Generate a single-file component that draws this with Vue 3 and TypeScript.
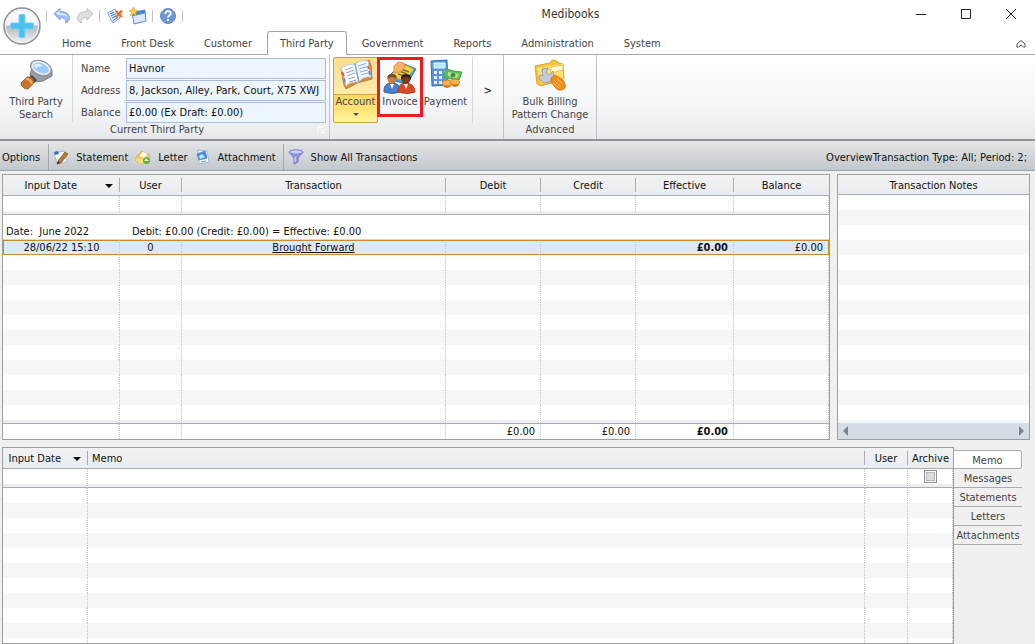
<script setup lang="ts">
import { ref } from 'vue'

interface Item { label: string; icon?: string }

const tabs: string[] = ['Home', 'Front Desk', 'Customer', 'Third Party', 'Government', 'Reports', 'Administration', 'System']
const activeTab = ref('Third Party')
const fields = [
  { id: 'name', label: 'Name', value: 'Havnor' },
  { id: 'address', label: 'Address', value: '8, Jackson, Alley, Park, Court, X75 XWJ' },
  { id: 'balance', label: 'Balance', value: '£0.00 (Ex Draft: £0.00)' },
]
const actions: Item[] = [
  { label: 'Statement', icon: 'statement' },
  { label: 'Letter', icon: 'letter' },
  { label: 'Attachment', icon: 'attachment' },
]
const columns: string[] = ['Input Date', 'User', 'Transaction', 'Debit', 'Credit', 'Effective', 'Balance']
const sideTabs: string[] = ['Memo', 'Messages', 'Statements', 'Letters', 'Attachments']
const activeSide = ref('Memo')
const archived = ref(false)
</script>

<template>
  <div class="window">
    <header class="top">
      <button class="orb" aria-label="Application menu">
        <svg viewBox="0 0 40 40" width="40" height="40">
          <defs>
            <linearGradient id="orbTop" x1="0" y1="0" x2="0" y2="1">
              <stop offset="0" stop-color="#ffffff" /><stop offset="0.48" stop-color="#f1f2f3" />
              <stop offset="0.5" stop-color="#b4b8bc" /><stop offset="1" stop-color="#f6f7f8" />
            </linearGradient>
          </defs>
          <circle cx="20" cy="20" r="18" fill="url(#orbTop)" stroke="#8c9196" stroke-width="1.5" />
          <circle cx="20" cy="20" r="16.4" fill="none" stroke="#eceeef" stroke-width="1.2" />
          <path d="M17 9q3-1.500 6 0v8h8q1.500 3 0 6h-8v8q-3 1.500-6 0v-8H9q-1.500-3 0-6h8z" fill="#4cc0ee" stroke="#79d0f2" />
        </svg>
      </button>
      <div class="top-main">
        <div class="titlebar">
          <div class="quick">
            <i class="bar"></i>
            <button aria-label="Undo"><svg viewBox="0 0 18 18" width="18" height="18"><path d="M1 6.500l6-5v3c6 0 9.500 2.500 9.500 6.500 0 2-1 4-4 5 1.500-3-1-5.500-5.500-5.500v2.500z" fill="#9fc0f2" stroke="#7b9fe0" /><path d="M3 6.500l3.500-3v2.500c4 0 7 1 8.500 4-2-1.500-5-2-9-2z" fill="#dcebff" /></svg></button>
            <button aria-label="Redo"><svg viewBox="0 0 18 18" width="18" height="18"><path d="M17 6.500l-6-5v3c-6 0-9.500 2.500-9.500 6.500 0 2 1 4 4 5-1.500-3 1-5.500 5.500-5.500v2.500z" fill="#dedfe1" stroke="#bfc2c5" /></svg></button>
            <i class="bar"></i>
            <button aria-label="Edit form"><svg viewBox="0 0 18 18" width="18" height="18"><path d="M1.500 6L9 2l5 9-7 5z" fill="#e8f1ff" stroke="#7f9fe0" /><path d="M4 7l4-2M5 9l5-2.500M6 11l5-2.500M7 13.500l5-3" stroke="#5b86dc" stroke-width="1.300" /><path d="M10 4l6 6M16 3.500l-6 6.500" stroke="#e87325" stroke-width="2.400" /></svg></button>
            <button aria-label="New window"><svg viewBox="0 0 18 18" width="18" height="18"><path d="M3 6l13-2 1 10-12 3z" fill="#dce9ff" stroke="#5c86dc" /><path d="M3 5l13-2.500.3 4L4 9z" fill="#4c83df" /><path d="M4.500 0l1.300 3 3.200.5-2.400 2 .8 3-2.900-1.600L1.700 8.500l.8-3L0 3.500 3.200 3z" fill="#ffd347" stroke="#e5a020" stroke-width=".7" /></svg></button>
            <i class="bar"></i>
            <button aria-label="Help"><svg viewBox="0 0 18 18" width="18" height="18"><circle cx="9" cy="9" r="7.500" fill="#6f97d6" stroke="#5f85c8" /><path d="M6.300 7c0-4 5.800-3.500 5.500-.5-.2 1.800-2.800 1.900-2.800 4M9 12v2" fill="none" stroke="#fff" stroke-width="1.900" /></svg></button>
            <i class="bar"></i>
          </div>
          <h1>Medibooks</h1>
          <div class="controls">
            <button aria-label="Minimize"><svg viewBox="0 0 12 12" width="12" height="12"><path d="M1 6.500h10" /></svg></button>
            <button aria-label="Maximize"><svg viewBox="0 0 12 12" width="12" height="12"><path d="M1.500 1.500h9v9h-9z" /></svg></button>
            <button aria-label="Close"><svg viewBox="0 0 12 12" width="12" height="12"><path d="M1 1l10 10M11 1L1 11" /></svg></button>
          </div>
        </div>
        <nav class="tabs">
          <button v-for="t in tabs" :key="t" :class="{ active: t === activeTab }" @click="activeTab = t">{{ t }}</button>
          <button class="collapse" aria-label="Collapse ribbon"><svg viewBox="0 0 10 10" width="10" height="10"><path d="M1 5l4-3.500L9 5v3H7.500L5 6 2.500 8H1z" fill="none" stroke="#50555a" /></svg></button>
        </nav>
      </div>
    </header>

    <section class="ribbon">
      <div class="group party">
        <button class="big search">
          <svg viewBox="0 0 34 34" width="34" height="34">
            <path d="M13 8l-2 8 5 7 8-1 9-5v-6z" fill="#9a9ea2" stroke="#7c8084" />
            <path d="M13 16l5 5-4 4-6-5z" fill="#4b4b4b" />
            <path d="M8 18q6-1 7 6l-6 6q-6 0-7-6z" fill="#c97428" stroke="#a9642a" />
            <path d="M7 20q5 0 6 5" stroke="#efad65" stroke-width="2" fill="none" />
            <ellipse cx="22" cy="9" rx="11" ry="7" transform="rotate(22 22 9)" fill="#c3c6ca" stroke="#8b9096" />
            <ellipse cx="22" cy="9" rx="9" ry="5.500" transform="rotate(22 22 9)" fill="#9fc9f8" stroke="#eef3f8" stroke-width="1.300" />
            <path d="M15 6q5-3 9 1-6 0-7 3z" fill="#dff0ff" />
          </svg>
          <span>Third Party<br>Search</span>
        </button>
        <div class="form">
          <div v-for="f in fields" :key="f.id" class="field">
            <label :for="f.id">{{ f.label }}</label>
            <input :id="f.id" type="text" :value="f.value">
          </div>
        </div>
        <div class="caption">Current Third Party</div>
        <svg class="launcher" viewBox="0 0 8 8" width="8" height="8"><path d="M1 7V1h5M7 3v4H3M3 3l3 3" fill="none" stroke="#fff" /></svg>
      </div>

      <div class="group ops">
        <button class="big account">
          <svg viewBox="0 0 34 34" width="34" height="34">
            <path d="M2 11l16-6 12-3 2 5 1 14-15 4-11 6-2-4z" fill="#d98a3c" stroke="#c87a35" />
            <path d="M2 10q8-5 14-4l4 18q-8-1-13 4z" fill="#fff" stroke="#b9c9dd" />
            <path d="M16 6q6-5 13-3l3 16q-8-1-12 5z" fill="#f1f7ff" stroke="#b9c9dd" />
            <path d="M16 6l4 18" stroke="#8aa6c9" stroke-width="1.500" />
            <path d="M6 12l8-3M7 15l8-3M8 18l8-3M9 21l7-2M10 24l7-2M19 8l8-2.500M20 11l8-2.500M21 14l8-2M22 17l7-2" stroke="#8aa6c9" />
            <path d="M3 14l2 4M29 8l1 3" stroke="#df594b" stroke-width="2" /><path d="M5 20l1 4M30 13l1 4" stroke="#5d8ee0" stroke-width="2" />
          </svg>
          <span>Account</span><b class="drop"></b>
        </button>
        <button class="big invoice">
          <svg viewBox="0 0 34 34" width="34" height="34">
            <path d="M7 15L19 3l14 6-9 15-12-3z" fill="#35a3dc" stroke="#2378b5" />
            <path d="M9 14L20 4l11 5-9 12-10-3z" fill="#f4d14c" stroke="#c79a22" />
            <path d="M18 9l8 3M16 11l8 3M15 14l7 2" stroke="#80702a" stroke-width="1.400" />
            <path d="M11 6l4-4 6 1 1 4-5 5-6 1z" fill="#f7b268" stroke="#e49a48" />
            <path d="M1 32q-1-9 8-9t8 9q-8 3-16 0z" fill="#4a80cc" stroke="#3768af" />
            <path d="M15 32q0-9 8-9t9 9q-8 3-17 0z" fill="#d94d26" stroke="#b33b1b" />
            <circle cx="9" cy="19" r="4.500" fill="#cf7c3c" /><path d="M4.500 19q-1-5 4.500-5t4.500 5q-2-2-4.500-2t-4.500 2z" fill="#7b4a28" />
            <circle cx="23" cy="19" r="4.500" fill="#7c3b1e" /><path d="M18 20q-1-6 5-6t5 6q-2-3-5-3t-5 3z" fill="#33201a" />
            <path d="M7 24l2 5 2-5M21 24l2 5 2-5" fill="#fff" />
          </svg>
          <span>Invoice</span>
        </button>
        <button class="big payment">
          <svg viewBox="0 0 34 34" width="34" height="34">
            <path d="M2 3l16-1 1 25-16 1z" fill="#5b95dd" stroke="#2f6fc0" />
            <path d="M5 5h11v5H5z" fill="#b9e9f6" stroke="#e6faff" />
            <g fill="#e9f3ff"><path d="M5 13h3v3H5zM10 13h3v3h-3zM15 13h2v3h-2zM5 18h3v3H5zM10 18h3v3h-3zM5 23h3v3H5zM10 23h3v3h-3z" /></g>
            <path d="M15 15l3-4 6 2 9 1-3 8-8-1-6-1z" fill="#5fbf55" stroke="#4ba348" /><path d="M19 14l11 2-2 4-9-2z" fill="#b0e49e" /><ellipse cx="24" cy="17" rx="2.500" ry="2" fill="#398d3b" />
            <path d="M14 25v3q4 4 8 0v-3zM22 23v4q4 4 8 0v-4z" fill="#d8731c" /><ellipse cx="18" cy="25" rx="4.500" ry="2.800" fill="#f9b44b" stroke="#dd8427" /><ellipse cx="26" cy="24" rx="4.500" ry="2.800" fill="#f9b44b" stroke="#dd8427" />
          </svg>
          <span>Payment</span>
        </button>
        <button class="more">&gt;</button>
      </div>

      <div class="group advanced">
        <button class="big">
          <svg viewBox="0 0 34 34" width="34" height="34">
            <path d="M2 7l15-3 2-3 5 1 1 2 5 1 1 14-9 4-14 4-4-2z" fill="#f4c63e" stroke="#dda32e" />
            <path d="M4 9l26-4v14L8 24z" fill="#ffe273" /><path d="M18 8l12-2v5l-12 3z" fill="#fff7cd" stroke="#e9c35a" />
            <path d="M9 10l6-1-2 5 4 2 3-4 1 6-4 5-6 1-5-4 1-4 3 1z" fill="#c3ccd8" stroke="#94a0b2" />
            <path d="M18 19l4-3 8 5q4 6 1 9-6 3-9-2l-4-5z" fill="#f28c16" stroke="#dc7d1c" /><path d="M21 21l7 7M20 24l6 5M24 19l6 7" stroke="#ffc456" />
          </svg>
          <span>Bulk Billing<br>Pattern Change</span>
        </button>
        <div class="caption">Advanced</div>
      </div>
    </section>

    <div class="toolbar">
      <button class="options">Options</button>
      <i></i>
      <button v-for="a in actions" :key="a.label">
        <svg viewBox="0 0 16 16" width="16" height="16">
          <g v-if="a.icon === 'statement'"><path d="M1 4l10-2 3 11-10 2z" fill="#fff" stroke="#a9b8d0" /><path d="M1 3l4-1 1 3-4 1z" fill="#3c6cc0" /><path d="M5 12l7-9 3 2-7 9-4 1z" fill="#b67b32" stroke="#7b5430" stroke-width=".7" /><path d="M4 15l1-3 2 2z" fill="#333" /></g>
          <g v-else-if="a.icon === 'letter'"><path d="M1 8l6-6 7 4v5l-7 4-6-3z" fill="#f5cf54" stroke="#d9a93e" /><path d="M4 7l4-5 5 3-3 5z" fill="#fffbe6" stroke="#d9c78c" /><path d="M1 9l6 2 7-4v5l-7 3-6-3z" fill="#f6df76" /><circle cx="11.500" cy="11.500" r="3.500" fill="#62ad43" /><path d="M9 12l2-3 3 3z" fill="#d8f5b3" /></g>
          <g v-else><path d="M3 1l9 1 2 11-10 2z" fill="#f7fbff" stroke="#a6bbd8" /><path d="M2 5l8-3 2 7-8 2z" fill="#438cdc" stroke="#5a8fd2" /><path d="M4 7l3-2 3 3-5 2z" fill="#c7e7ff" /><path d="M6 13l5-1" stroke="#8392ab" /></g>
        </svg>
        <span>{{ a.label }}</span>
      </button>
      <i></i>
      <button class="filter-button">
        <svg viewBox="0 0 16 16" width="16" height="16"><path d="M1 3l5 6v6l4-2V9l5-6z" fill="#9297df" stroke="#7578c6" /><ellipse cx="8" cy="3" rx="7" ry="2.200" fill="#c9cefa" stroke="#7b7fcc" /><path d="M7 8v5" stroke="#c9cefa" stroke-width="1.500" /></svg>
        <span>Show All Transactions</span>
      </button>
      <span class="overview">OverviewTransaction Type: All; Period: 2;</span>
    </div>

    <main class="content">
      <div class="upper">
        <div class="panel">
          <table class="grid">
            <colgroup><col class="c-date"><col class="c-user"><col><col class="c-money"><col class="c-money"><col class="c-effective"><col class="c-balance"></colgroup>
            <thead>
              <tr><th v-for="(c, i) in columns" :key="c"><span>{{ c }}<b v-if="i === 0" class="sort"></b></span></th></tr>
              <tr class="filter"><td v-for="c in columns" :key="c"></td></tr>
            </thead>
            <tbody>
              <tr class="month"><td>Date:&nbsp; June 2022</td><td class="summary" colspan="6">Debit: £0.00 (Credit: £0.00) = Effective: £0.00</td></tr>
            </tbody>
            <tbody>
              <tr class="selected"><td>28/06/22 15:10</td><td>0</td><td><a href="#">Brought Forward</a></td><td></td><td></td><td class="num strong">£0.00</td><td class="num">£0.00</td></tr>
              <tr v-for="r in 11" :key="r" :class="{ stripe: r % 2 === 0, end: r === 11 }"><td v-for="c in columns" :key="c"></td></tr>
            </tbody>
            <tfoot>
              <tr><td></td><td></td><td></td><td class="num">£0.00</td><td class="num">£0.00</td><td class="num strong">£0.00</td><td></td></tr>
            </tfoot>
          </table>
        </div>
        <div class="panel notes">
          <h2>Transaction Notes</h2>
          <div class="lines"></div>
          <div class="scroll"><button aria-label="Scroll left" class="left"></button><button aria-label="Scroll right" class="right"></button></div>
        </div>
      </div>

      <div class="lower">
        <div class="panel memo">
          <table class="grid">
            <colgroup><col class="m-date"><col><col class="m-user"><col class="m-archive"></colgroup>
            <thead>
              <tr><th><span>Input Date<b class="sort"></b></span></th><th class="lead"><span>Memo</span></th><th><span>User</span></th><th><span>Archive</span></th></tr>
              <tr class="filter"><td></td><td></td><td></td><td><input v-model="archived" type="checkbox" aria-label="Archive"></td></tr>
            </thead>
            <tbody>
              <tr v-for="r in 10" :key="r" :class="{ stripe: r % 2 === 0 }"><td v-for="c in 4" :key="c"></td></tr>
              <tr class="last"><td v-for="c in 4" :key="c"></td></tr>
            </tbody>
          </table>
        </div>
        <nav class="side">
          <button v-for="s in sideTabs" :key="s" :class="{ active: s === activeSide }" @click="activeSide = s">{{ s }}</button>
        </nav>
      </div>
    </main>
  </div>
</template>

<style>
body { margin: 0; background: #f0f0f0; }
</style>

<style scoped>
* { box-sizing: border-box; }
.window { min-height: 100vh; overflow: hidden; font: 11px/13px "DejaVu Sans Condensed", "Noto Sans", sans-serif; color: #111; background: #f0f0f0; }
button { font: inherit; color: inherit; border: 0; padding: 0; background: none; white-space: nowrap; }
svg { display: block; flex: none; }
.top { display: flex; background: #fff; height: 55px; }
.orb { position: relative; z-index: 1; width: 44px; flex: none; padding: 5px 0 0 2px; display: block; height: 46px; }
.top-main { flex: 1; min-width: 0; display: flex; flex-direction: column; margin-left: -44px; }
.titlebar { display: grid; grid-template-columns: 1fr auto 1fr; height: 31px; align-items: center; padding-left: 44px; }
h1 { font: inherit; font-size: 12px; margin: 0; padding-left: 62px; padding-bottom: 3px; color: #333; }
.quick { display: flex; align-items: center; padding-left: 2px; }
.quick .bar { width: 1px; height: 12px; background: #c4c7ca; margin-right: 6px; }
.quick button { width: 18px; margin-right: 5px; }
.controls { display: flex; justify-content: flex-end; padding: 0 18px 3px 0; gap: 33px; }
.controls svg { fill: none; stroke: #222; }
.tabs { display: flex; height: 24px; border-bottom: 1px solid #a3a7ab; padding-left: 47px; color: #444; }
.tabs button { padding: 0 14px; margin-bottom: -1px; border: 1px solid transparent; border-bottom: 0; height: 24px; }
.tabs .active { background: #fff; border-color: #a3a7ab; border-radius: 3px 3px 0 0; padding: 0 12px; }
.tabs .collapse { margin-left: auto; padding: 0 8px; }

.ribbon { display: flex; height: 86px; background: linear-gradient(#fff, #f5f6f8 60%, #e7eaed); border-bottom: 2px solid #8f9398; color: #444; }
.group { position: relative; border-right: 1px solid #bfc3c8; }
.party { width: 330px; display: grid; grid-template-columns: 73px 1fr; grid-template-rows: 67px 1fr; }
.big { display: flex; flex-direction: column; align-items: center; gap: 2px; padding-top: 4px; }
.search { border-right: 1px solid #d5d8dc; }
.form { padding: 2px 3px 0 8px; }
.field { display: flex; align-items: center; height: 22px; }
.field label { width: 45px; flex: none; }
.field input { flex: 1; min-width: 0; height: 21px; border: 1px solid #a9bedf; background: #edf5fd; font: inherit; color: #111; padding: 0 2px; border-radius: 0; }
.caption { text-align: center; }
.party .caption { grid-column: 1 / 3; padding: 1px 15px 0 0; }
.launcher { position: absolute; right: 4px; bottom: 5px; }
.ops { display: flex; width: 174px; padding: 2px 0 0 3px; align-items: flex-start; }
.ops .big { gap: 0; padding-top: 1px; }
.ops .big span { padding-top: 3px; }
.account { width: 45px; height: 66px; border: 1px solid #c9a23f; border-radius: 2px; background: linear-gradient(#f8df92, #fdeba8 36px, #c8a447 36px, #c8a447 37px, #fdd765 37px, #ffe173 50px, #fff6a0); }
.ops .account { padding-top: 0; }
.drop { border: 3px solid transparent; border-top-color: #555; border-bottom: 0; margin-top: 5px; }
.invoice { width: 46px; height: 60px; border: 3px solid #ed1c24; margin-left: -1px; }
.ops .invoice { padding: 0; }
.ops .invoice span { padding-top: 1px; }
.payment { width: 45px; }
.more { flex: 1; height: 66px; margin-left: 4px; border-left: 1px solid #d5d8dc; font-weight: bold; }
.advanced { width: 93px; }
.advanced .big { width: 100%; height: 68px; }

.toolbar { display: flex; align-items: center; height: 30px; background: linear-gradient(#e4e6e8, #c3c8cd); border-bottom: 1px solid #9ea3a8; padding: 2px 8px 0 2px; }
.toolbar button { display: flex; align-items: center; gap: 7px; margin-right: 7px; height: 26px; }
.toolbar .options { margin-right: 8px; }
.toolbar span, .toolbar .options { padding-top: 1px; }
.toolbar i { width: 1px; height: 26px; background: #a2a7ad; margin-right: 4px; }
.overview { margin-left: auto; white-space: nowrap; }

.content { padding: 3px 5px 0 2px; }
.upper { display: grid; grid-template-columns: 1fr 193px; gap: 7px; }
.panel { border: 1px solid #9b9fa4; background: #fff; min-width: 0; }
.grid { width: 100%; table-layout: fixed; border-collapse: separate; border-spacing: 0; }
.c-date { width: 117px; } .c-user { width: 62px; } .c-money { width: 95px; } .c-effective { width: 98px; } .c-balance { width: 95px; }
.m-date { width: 85px; } .m-user { width: 43px; } .m-archive { width: 45px; }
td { height: 15px; padding: 0; border-right: 1px dotted #c4c6c8; text-align: center; white-space: nowrap; line-height: 13px; }
th { height: 21px; padding: 3px 0; font-weight: normal; background: linear-gradient(#f2f2f3, #e9edf0); border-bottom: 1px solid #a9adb1; }
th span { display: flex; align-items: center; justify-content: center; height: 14px; padding-top: 1px; border-right: 1px solid #a9adb1; }
th:last-child span { border-right: 0; }
.sort { border: 4px solid transparent; border-top-color: #000; border-bottom: 0; }
th:first-child span { justify-content: flex-end; padding-right: 6px; }
th:first-child .sort { margin-left: 28px; }
.memo th:first-child .sort { margin-left: 12px; }
.lead span { justify-content: flex-start; padding-left: 4px; }
.filter td { height: 19px; border-bottom: 1px solid #a9adb1; box-shadow: inset 0 -3px #eceeef; }
.month td { height: 25px; border-right: 0; border-bottom: 1px solid #d5d7d9; text-align: left; vertical-align: bottom; padding: 0 0 1px 3px; }
.month .summary { padding-left: 12px; }
.selected td { background: #dce9f7; border-top: 1px solid #c88a2d; border-bottom: 1px solid #c88a2d; line-height: 13px; }
.selected td:first-child { border-left: 1px solid #c88a2d; }
.selected td:last-child { border-right: 1px solid #c88a2d; }
.selected a { color: inherit; }
.stripe td { background-color: #f5f6f8; }
.end td { height: 18px; box-shadow: inset 0 -3px #eceeef; }
.num { text-align: right; padding-right: 5px; }
.strong { font-weight: bold; }
tfoot td { height: 16px; border-top: 1px solid #a9adb1; }
.notes { display: flex; flex-direction: column; }
h2 { margin: 0; height: 20px; font: inherit; text-align: center; padding-top: 4px; background: linear-gradient(#f2f2f3, #e9edf0); border-bottom: 1px solid #a9adb1; }
.lines { flex: 1; background: repeating-linear-gradient(#fff 0 15px, #f5f6f8 15px 30px); }
.scroll { height: 16px; display: flex; justify-content: space-between; align-items: center; padding: 0 5px; background: #d7dde5; }
.scroll button { border: 5px solid transparent; }
.scroll .left { border-right-color: #788590; border-left: 0; }
.scroll .right { border-left-color: #788590; border-right: 0; }
.lower { display: grid; grid-template-columns: 1fr 76px; margin-top: 7px; }
.side { padding-top: 3px; color: #444; }
.side button { display: block; width: 68px; height: 19px; padding-top: 1px; border-bottom: 1px solid #a9adb1; }
.side .active { background: #fff; border: 1px solid #a9adb1; border-left: 0; border-radius: 0 3px 3px 0; }
.memo input { display: block; appearance: none; width: 13px; height: 13px; margin: -3px auto 0; border: 1px solid #8e9296; background: #dcdee0; box-shadow: inset 0 0 0 1px #f5f5f5, inset 0 0 0 2px #b5b8bc; }
.last td { height: 5px; }
</style>
